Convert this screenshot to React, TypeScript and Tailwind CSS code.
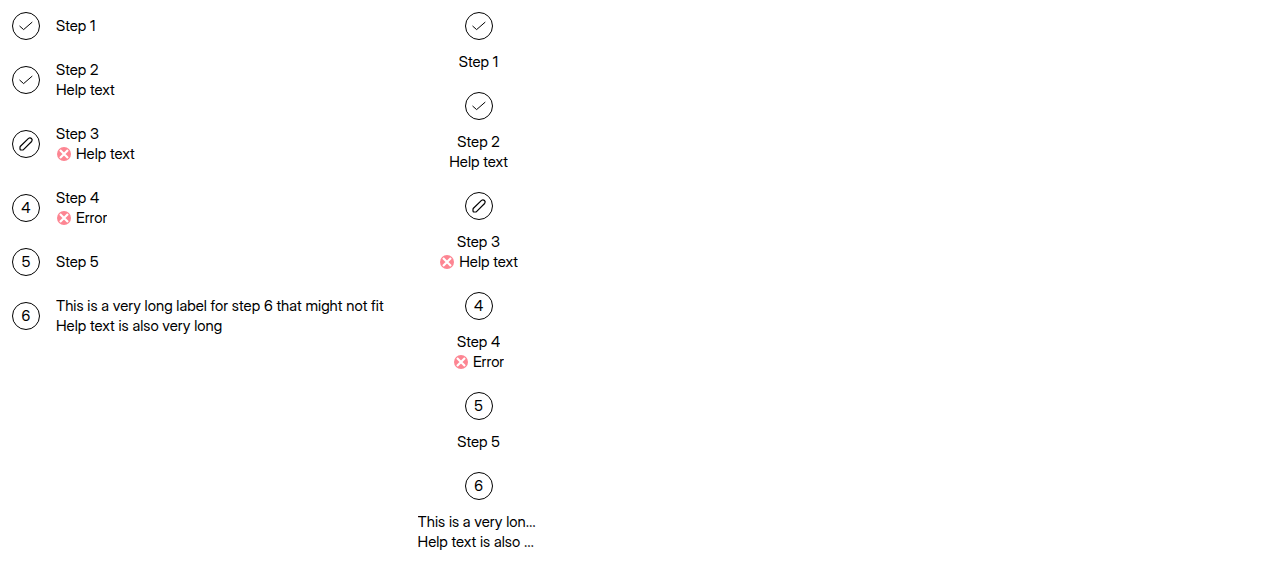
type Status = 'done' | 'edit' | 'number';

interface Step {
  label: string;
  help?: string;
  error?: boolean;
  status: Status;
}

const steps: Step[] = [
  { label: 'Step 1', status: 'done' },
  { label: 'Step 2', help: 'Help text', status: 'done' },
  { label: 'Step 3', help: 'Help text', error: true, status: 'edit' },
  { label: 'Step 4', help: 'Error', error: true, status: 'number' },
  { label: 'Step 5', status: 'number' },
  {
    label: 'This is a very long label for step 6 that might not fit',
    help: 'Help text is also very long',
    status: 'number',
  },
];

function CheckIcon() {
  return (
    <svg aria-hidden="true" className="size-4" viewBox="0 0 16 16" fill="none" stroke="currentColor" strokeLinecap="round" strokeLinejoin="round">
      <path d="M1.8 8.2 5.6 11.6 14 4.3" />
    </svg>
  );
}

function PencilIcon() {
  return (
    <svg aria-hidden="true" className="size-4" viewBox="0 0 16 16" fill="none" stroke="currentColor" strokeWidth="1.2" strokeLinecap="round" strokeLinejoin="round">
      <path d="M2.2 10.5 10.5 2.4a2.2 2.2 0 0 1 3.1 3.1L5.5 13.6q-.4.4-1 .4H3a1 1 0 0 1-1-1v-1.5q0-.6.2-1Z" />
    </svg>
  );
}

function ErrorIcon() {
  return (
    <svg aria-hidden="true" className="size-4 shrink-0" viewBox="0 0 16 16">
      <circle cx="8" cy="8" r="7" fill="#fd8592" />
      <path d="m4 4 8 8m0-8-8 8" stroke="#fff" strokeWidth="2.2" />
    </svg>
  );
}

function Marker({ status, index }: { status: Status; index: number }) {
  return (
    <span className="flex size-7 shrink-0 items-center justify-center rounded-full border border-black">
      {status === 'done' && <CheckIcon />}
      {status === 'edit' && <PencilIcon />}
      {status === 'number' && index}
    </span>
  );
}

function StepText({ step, centered }: { step: Step; centered?: boolean }) {
  return (
    <span className={centered ? 'grid w-full grid-cols-1 justify-items-center' : 'grid'}>
      <span className="max-w-full truncate">{step.label}</span>
      {step.help && (
        <span className="flex max-w-full items-center gap-1">
          {step.error && <ErrorIcon />}
          <span className="truncate">{step.help}</span>
        </span>
      )}
    </span>
  );
}

export default function App() {
  return (
    <main className="flex items-start gap-[34px] p-3 font-['Inter_Display','Inter',sans-serif] text-[15px]/5 text-black">
      <ol className="flex flex-col gap-5">
        {steps.map((step, i) => (
          <li key={step.label} className={step.status === 'edit' ? 'flex items-center gap-4 py-1' : 'flex items-center gap-4'}>
            <Marker status={step.status} index={i + 1} />
            <StepText step={step} />
          </li>
        ))}
      </ol>
      <ol className="flex w-[122px] flex-col gap-5">
        {steps.map((step, i) => (
          <li key={step.label} className="flex flex-col items-center gap-3">
            <Marker status={step.status} index={i + 1} />
            <StepText step={step} centered />
          </li>
        ))}
      </ol>
    </main>
  );
}
